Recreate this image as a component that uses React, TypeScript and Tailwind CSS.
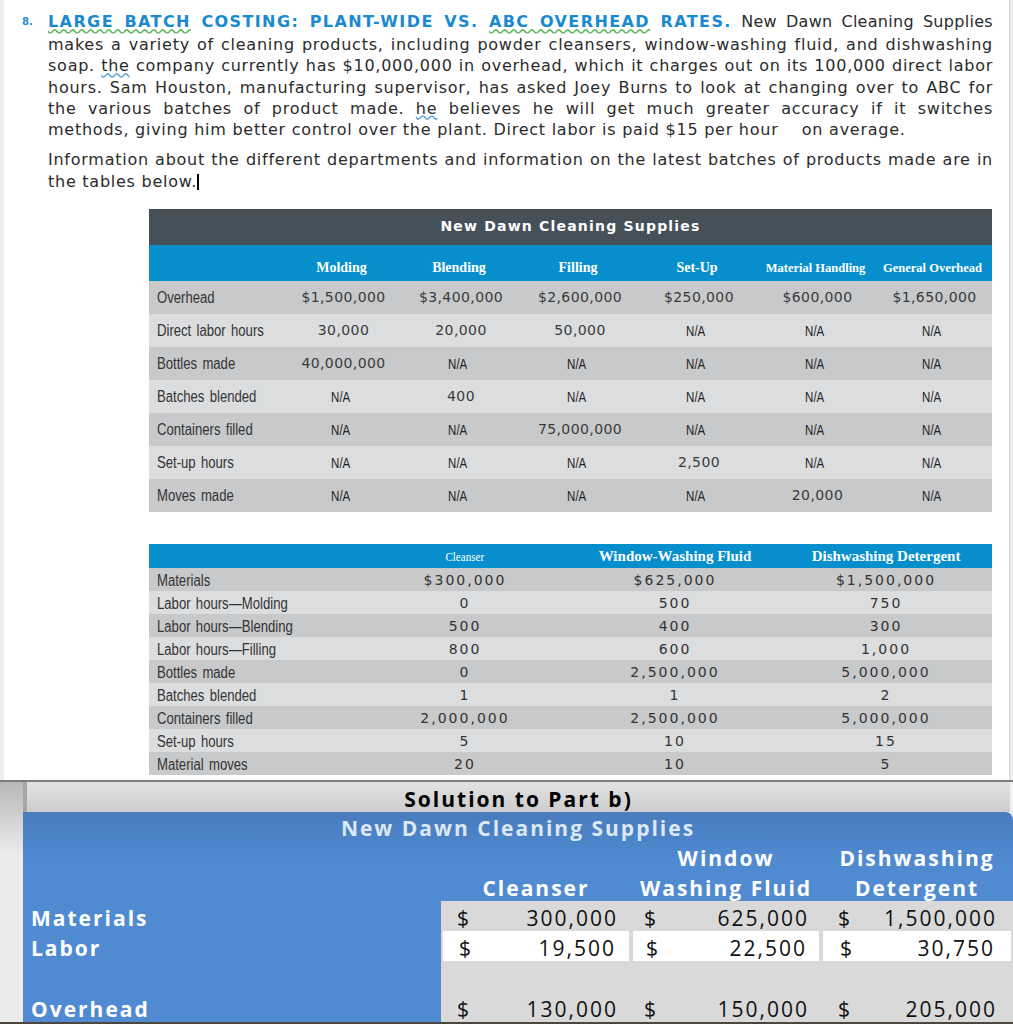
const depts = [
  { name: "Molding", cls: "text-[14px]" },
  { name: "Blending", cls: "text-[14px]" },
  { name: "Filling", cls: "text-[14px]" },
  { name: "Set-Up", cls: "text-[14px]" },
  { name: "Material Handling", cls: "text-[12.5px]" },
  { name: "General Overhead", cls: "text-[12.5px]" },
];

const deptRows = [
  ["Overhead", "$1,500,000", "$3,400,000", "$2,600,000", "$250,000", "$600,000", "$1,650,000"],
  ["Direct labor hours", "30,000", "20,000", "50,000", "N/A", "N/A", "N/A"],
  ["Bottles made", "40,000,000", "N/A", "N/A", "N/A", "N/A", "N/A"],
  ["Batches blended", "N/A", "400", "N/A", "N/A", "N/A", "N/A"],
  ["Containers filled", "N/A", "N/A", "75,000,000", "N/A", "N/A", "N/A"],
  ["Set-up hours", "N/A", "N/A", "N/A", "2,500", "N/A", "N/A"],
  ["Moves made", "N/A", "N/A", "N/A", "N/A", "20,000", "N/A"],
];

const batchRows = [
  ["Materials", "$300,000", "$625,000", "$1,500,000"],
  ["Labor hours\u2014Molding", "0", "500", "750"],
  ["Labor hours\u2014Blending", "500", "400", "300"],
  ["Labor hours\u2014Filling", "800", "600", "1,000"],
  ["Bottles made", "0", "2,500,000", "5,000,000"],
  ["Batches blended", "1", "1", "2"],
  ["Containers filled", "2,000,000", "2,500,000", "5,000,000"],
  ["Set-up hours", "5", "10", "15"],
  ["Material moves", "20", "10", "5"],
];

const solutionRows = [
  { label: "Materials", vals: ["300,000", "625,000", "1,500,000"], white: false },
  { label: "Labor", vals: ["19,500", "22,500", "30,750"], white: true },
  { label: "", vals: null, white: false },
  { label: "Overhead", vals: ["130,000", "150,000", "205,000"], white: false },
];

const cellPad = ["pl-[16px] pr-[13px]", "pl-[13px] pr-[12px]", "pl-[17px] pr-[16px]"];

// narrow label text (Arial Narrow look)
const Narrow = ({ children }: { children: React.ReactNode }) => (
  <span className="inline-block origin-left scale-x-[0.82] whitespace-nowrap font-['Liberation_Sans',sans-serif] text-[16px] text-[#333] [word-spacing:2px]">
    {children}
  </span>
);

const Problem = () => {
  return (
    <div className="flex pt-[9px] pl-[18px] font-['DejaVu_Sans',sans-serif] text-[16px] tracking-[0.75px] text-[#2b2b2b]">
      <div className="w-[26px] h-[25px] leading-[25px] text-[10px] font-bold tracking-normal text-[#1c8ccf]">8.</div>
      <div className="w-[945px]">
        <div className="h-[25px] leading-[25px] text-justify [text-align-last:justify]">
          <span className="font-bold tracking-[1.4px] text-[#1a8ad0]">
            <span className="underline decoration-wavy decoration-[#5cb85c] underline-offset-[1px]">LARGE BATCH</span>{" "}
            COSTING: PLANT-WIDE VS.{" "}
            <span className="underline decoration-wavy decoration-[#5cb85c] underline-offset-[1px]">ABC OVERHEAD</span>{" "}
            RATES.
          </span>{" "}
          <span className="tracking-[0.3px]">New Dawn Cleaning Supplies</span>
        </div>
        <div className="h-[21.25px] leading-[21.25px] text-justify [text-align-last:justify]">
          makes a variety of cleaning products, including powder cleansers, window-washing fluid, and dishwashing
        </div>
        <div className="h-[21.25px] leading-[21.25px] text-justify [text-align-last:justify]">
          soap. <span className="underline decoration-wavy decoration-[#6aa7d8] underline-offset-[1px]">the</span> company
          currently has $10,000,000 in overhead, which it charges out on its 100,000 direct labor
        </div>
        <div className="h-[21.25px] leading-[21.25px] text-justify [text-align-last:justify]">
          hours. Sam Houston, manufacturing supervisor, has asked Joey Burns to look at changing over to ABC for
        </div>
        <div className="h-[21.25px] leading-[21.25px] text-justify [text-align-last:justify]">
          the various batches of product made.{" "}
          <span className="underline decoration-wavy decoration-[#6aa7d8] underline-offset-[1px]">he</span> believes he
          will get much greater accuracy if it switches
        </div>
        <div className="h-[21.25px] leading-[21.25px] whitespace-pre">
          methods, giving him better control over the plant. Direct labor is paid $15 per hour    on average.
        </div>
        <div className="mt-[9px] h-[21.25px] leading-[21.25px] text-justify [text-align-last:justify]">
          Information about the different departments and information on the latest batches of products made are in
        </div>
        <div className="h-[21.25px] leading-[21.25px]">
          the tables below.
          <span className="inline-block w-[2px] h-[16px] bg-black align-[-3px]" />
        </div>
      </div>
    </div>
  );
};

const DeptTable = () => {
  return (
    <div className="ml-[145px] mt-[17px] w-[843px]">
      <div className="flex h-[36px] items-center justify-center bg-[#465059] font-['DejaVu_Sans',sans-serif] text-[14px] font-bold tracking-[1.2px] text-white">
        New Dawn Cleaning Supplies
      </div>
      <div className="grid h-[36px] grid-cols-[136px_117px_118px_120px_118px_119px_115px] bg-[#078fcd] font-['Liberation_Serif',serif] font-bold text-white">
        <div />
        {depts.map((d) => (
          <div key={d.name} className={`flex items-end justify-center pb-[3px] pr-[4px] ${d.cls}`}>
            {d.name}
          </div>
        ))}
      </div>
      {deptRows.map((row, i) => (
        <div
          key={row[0]}
          className={`grid h-[33px] grid-cols-[136px_117px_118px_120px_118px_119px_115px] items-center ${
            i % 2 === 0 ? "bg-[#c8c9cb]" : "bg-[#dcdddf]"
          }`}
        >
          <div className="pl-[8px]">
            <Narrow>{row[0]}</Narrow>
          </div>
          {row.slice(1).map((v, j) =>
            v === "N/A" ? (
              <div key={j} className="text-center pr-[6px]">
                <span className="inline-block scale-x-[0.82] font-['Liberation_Sans',sans-serif] text-[14px] text-[#222]">
                  N/A
                </span>
              </div>
            ) : (
              <div key={j} className="text-center font-['DejaVu_Sans',sans-serif] text-[14px] tracking-[0.4px] text-[#3a3a3a]">
                {v}
              </div>
            )
          )}
        </div>
      ))}
    </div>
  );
};

const BatchTable = () => {
  return (
    <div className="ml-[145px] mt-[32px] w-[843px]">
      <div className="grid h-[24px] grid-cols-[211px_210px_210px_212px] items-center bg-[#078fcd] font-['Liberation_Serif',serif] text-white">
        <div />
        <div className="text-center">
          <span className="inline-block scale-x-[0.85] text-[13px]">Cleanser</span>
        </div>
        <div className="text-center text-[15px] font-bold">Window-Washing Fluid</div>
        <div className="text-center text-[15px] font-bold">Dishwashing Detergent</div>
      </div>
      {batchRows.map((row, i) => (
        <div
          key={row[0]}
          className={`grid h-[23px] grid-cols-[211px_210px_210px_212px] items-center ${
            i % 2 === 0 ? "bg-[#c8c9cb]" : "bg-[#dcdddf]"
          }`}
        >
          <div className="pl-[8px]">
            <Narrow>{row[0]}</Narrow>
          </div>
          {row.slice(1).map((v, j) => (
            <div key={j} className="text-center font-['DejaVu_Sans',sans-serif] text-[14px] tracking-[2px] text-[#333]">
              {v}
            </div>
          ))}
        </div>
      ))}
    </div>
  );
};

const Solution = () => {
  return (
    <div className="flex flex-col font-['Open_Sans',sans-serif] tracking-[2px]">
      <div className="h-[2px] bg-[#7d7d7d]" />
      <div className="flex h-[240px]">
        <div className="w-[23px] bg-linear-to-b from-[#b8b8b8] to-[#ebebeb] to-30%" />
        <div className="flex w-[990px] flex-col bg-[#ececec]">
          <div className="flex h-[30px]">
            <div className="w-[4px] bg-[#a6a6a6]" />
            <div className="flex w-[983px] items-end justify-center bg-linear-to-b from-[#e3e3e3] to-[#cccccc] text-[21px] font-bold leading-[26px] text-black">
              Solution to Part b)
            </div>
            <div className="w-[3px] bg-[#f2f2f2]" />
          </div>
          <div className="grid h-[210px] grid-cols-[418px_190px_190px_192px] grid-rows-[29px_30px_30px_30px_30px_30px_31px] overflow-hidden rounded-tr-[8px] bg-linear-to-b from-[#497cbd] to-[#508bd2] to-25% text-[21px] leading-[26px]">
            <div className="col-span-4 flex items-end justify-center font-bold text-[#dde7f5]">
              New Dawn Cleaning Supplies
            </div>
            <div />
            <div />
            <div className="flex items-end justify-center font-bold text-white">Window</div>
            <div className="flex items-end justify-center font-bold text-white">Dishwashing</div>
            <div />
            <div className="flex items-end justify-center font-bold text-white">Cleanser</div>
            <div className="flex items-end justify-center font-bold text-white">Washing Fluid</div>
            <div className="flex items-end justify-center font-bold text-white">Detergent</div>
            {solutionRows.map((r, i) => (
              <div key={i} className="contents">
                <div className="flex items-end pl-[8px] font-bold text-white">{r.label}</div>
                {[0, 1, 2].map((j) => (
                  <div key={j} className="flex bg-[#d9d9d9]">
                    <div
                      className={`flex flex-1 items-end justify-between text-[#111] ${cellPad[j]} ${
                        r.white ? "mx-[2px] bg-white" : ""
                      }`}
                    >
                      {r.vals ? (
                        <>
                          <span>$</span>
                          <span>{r.vals[j]}</span>
                        </>
                      ) : null}
                    </div>
                  </div>
                ))}
              </div>
            ))}
          </div>
        </div>
      </div>
      <div className="h-[2px] bg-[#4d463f]" />
    </div>
  );
};

export default function App() {
  return (
    <div className="h-[1024px] w-[1013px] overflow-hidden bg-white">
      <div className="flex h-[780px] bg-[#eeeeee]">
        <div className="ml-[4px] w-[1006px] border-r border-[#d2d2d2] bg-white">
          <Problem />
          <DeptTable />
          <BatchTable />
        </div>
      </div>
      <Solution />
    </div>
  );
}
